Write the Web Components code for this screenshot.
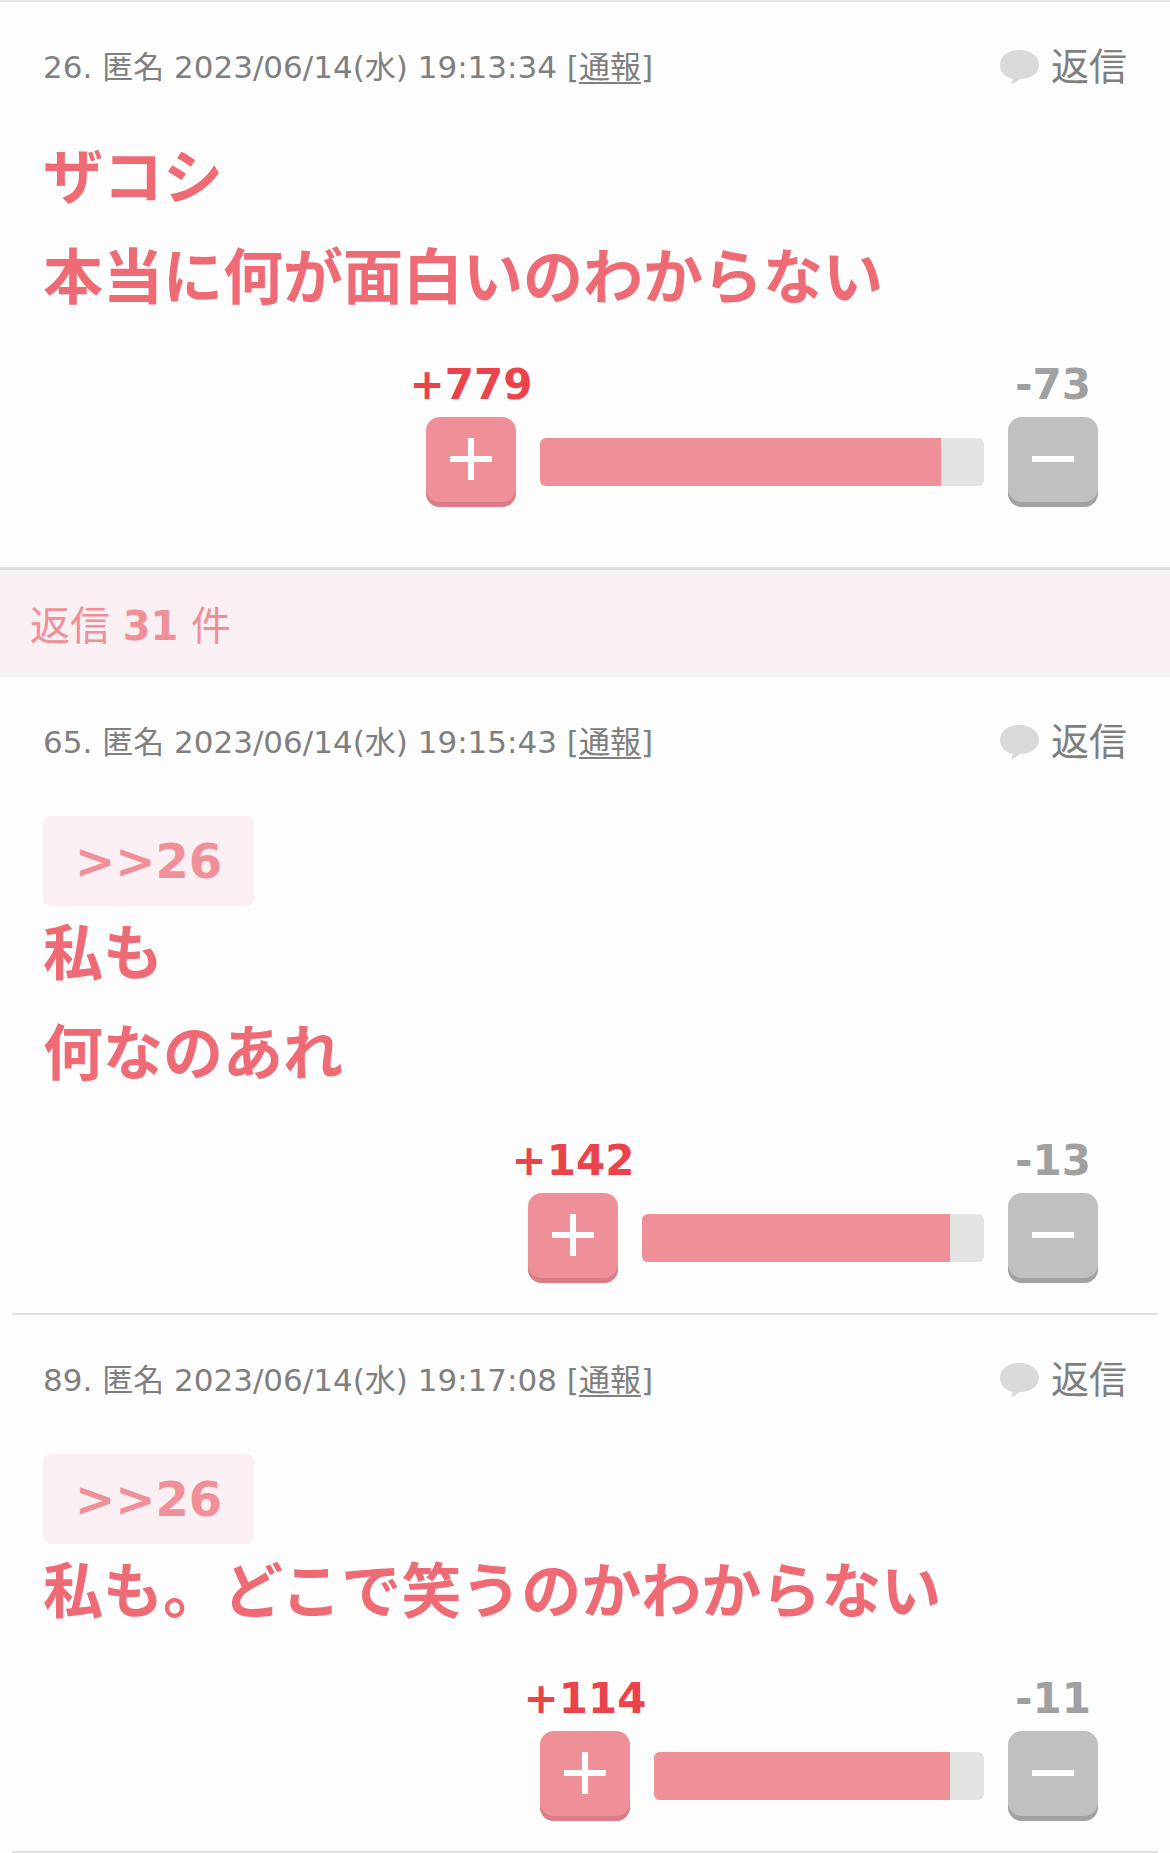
<!DOCTYPE html>
<html lang="ja">
<head>
<meta charset="utf-8">
<meta name="viewport" content="width=device-width, initial-scale=1">
<title>コメント</title>
<style>
  body {
    margin: 0;
    background: #fdfdfd;
    color: #7f7f7f;
    font-family: Verdana, "DejaVu Sans", "Noto Sans CJK JP", sans-serif;
  }
</style>
</head>
<body>

<comment-list>
  <comment-item class="parent" number="26" date="2023/06/14(水) 19:13:34">
    ザコシ<br>本当に何が面白いのわからない
    <vote-bar slot="votes" plus="779" minus="73" width="444" fill="401"></vote-bar>
  </comment-item>

  <reply-count>31</reply-count>

  <comment-item number="65" date="2023/06/14(水) 19:15:43">
    <reply-anchor to="26"></reply-anchor>
    私も<br>何なのあれ
    <vote-bar slot="votes" plus="142" minus="13" width="342" fill="308"></vote-bar>
  </comment-item>

  <comment-item number="89" date="2023/06/14(水) 19:17:08">
    <reply-anchor to="26"></reply-anchor>
    私も。どこで笑うのかわからない
    <vote-bar slot="votes" plus="114" minus="11" width="330" fill="296"></vote-bar>
  </comment-item>
</comment-list>

<script>
function attach(element, html) {
  const template = document.createElement('template')
  template.innerHTML = html
  const root = element.attachShadow({ mode: 'open' })
  root.appendChild(template.content.cloneNode(true))
  return root
}

class CommentList extends HTMLElement {
  constructor() {
    super()
    attach(this, `
      <style>
        :host {
          display: block;
          border-top: 2px solid #e6e6e6;
        }
      </style>
      <main><slot></slot></main>
    `)
  }
}

class CommentItem extends HTMLElement {
  constructor() {
    super()
    this._shadowRoot = attach(this, `
      <style>
        :host {
          display: block;
          margin: 0 12px;
          padding: 40px 31px 30px;
          border-bottom: 2px solid #e0e0e0;
        }

        /* the thread opener is closed by the reply count bar */
        :host(.parent) {
          padding-bottom: 60px;
          border-bottom: 0;
        }

        header {
          display: flex;
          justify-content: space-between;
          align-items: center;
          height: 50px;
          font-size: 31px;
          line-height: 50px;
        }

        a {
          color: inherit;
        }

        .report {
          text-decoration-thickness: 2px;
          text-underline-offset: 4px;
        }

        .reply {
          display: flex;
          align-items: center;
          gap: 12px;
          padding: 0;
          border: 0;
          background: none;
          color: inherit;
          font-family: inherit;
          font-size: 38px;
          line-height: 52px;
        }

        .body {
          margin-top: 36px;
          color: #ee6b76;
          font-size: 60px;
          font-weight: 700;
          line-height: 100px;
        }

        .votes {
          display: flex;
          justify-content: flex-end;
          margin-top: 32px;
          padding-right: 29px;
        }
      </style>

      <article>
        <header>
          <span><span class="number"></span>. 匿名 <span class="date"></span> [<a class="report" href="#report">通報</a>]</span>
          <button class="reply" type="button">
            <svg width="39" height="34" viewBox="0 0 39 34" aria-hidden="true">
              <path d="M19 0C8 0 0 6 0 15c0 7 5 12 13 14-1 2-2 4-1 5 3-1 5-3 8-5 11 0 19-6 19-14C39 6 30 0 19 0z" fill="#d9d9d9"/>
            </svg>
            <span>返信</span>
          </button>
        </header>
        <div class="body"><slot></slot></div>
        <div class="votes"><slot name="votes"></slot></div>
      </article>
    `)
  }

  connectedCallback() {
    this._shadowRoot.querySelector('.number').textContent = this.getAttribute('number')
    this._shadowRoot.querySelector('.date').textContent = this.getAttribute('date')
  }
}

class ReplyAnchor extends HTMLElement {
  constructor() {
    super()
    this._shadowRoot = attach(this, `
      <style>
        :host {
          display: block;
          height: 88px;
          padding-top: 13px;
        }

        a {
          display: block;
          width: fit-content;
          padding: 0 32px;
          border-radius: 8px;
          background: #faeff2;
          color: #ef8f98;
          font-size: 48px;
          line-height: 90px;
          text-decoration: none;
        }
      </style>
      <a></a>
    `)
  }

  connectedCallback() {
    const link = this._shadowRoot.querySelector('a')
    link.href = '#comment' + this.getAttribute('to')
    link.textContent = '>>' + this.getAttribute('to')
  }
}

class ReplyCount extends HTMLElement {
  constructor() {
    super()
    attach(this, `
      <style>
        :host {
          display: block;
          padding: 10px 30px 0;
          border-top: 3px solid #e0e0e0;
          border-bottom: 5px solid #f5f3f4;
          background: #faeff2;
          box-shadow: inset 0 6px #f3f2f2;
          color: #ef8f98;
          font-size: 40px;
          line-height: 92px;
        }

        p {
          margin: 0;
        }
      </style>
      <p>返信 <b><slot></slot></b> 件</p>
    `)
  }
}

class VoteBar extends HTMLElement {
  constructor() {
    super()
    this._shadowRoot = attach(this, `
      <style>
        :host {
          display: grid;
          grid-template-columns: 90px auto 90px;
          column-gap: 24px;
          align-items: center;
        }

        .count {
          display: flex;
          justify-content: center;
          height: 57px;
          font-size: 42px;
          font-weight: 700;
          line-height: 49px;
          white-space: nowrap;
        }

        .plus {
          color: #ea434b;
        }

        .minus {
          grid-column: 3;
          color: #a0a0a0;
        }

        button {
          display: flex;
          justify-content: center;
          align-items: center;
          height: 90px;
          padding: 0 0 6px;
          border: 0;
          border-radius: 14px;
          background: #ef8f98;
          box-shadow: inset 0 -5px #db7d88;
        }

        button.down {
          background: #c0c0c0;
          box-shadow: inset 0 -5px #a2a2a2;
        }

        .track {
          height: 48px;
          border-radius: 6px;
          background: #e3e3e3;
          overflow: hidden;
        }

        .fill {
          height: 100%;
          background: #ef8f98;
        }
      </style>

      <span class="count plus"></span>
      <span class="count minus"></span>
      <button class="up" type="button" aria-label="プラス">
        <svg width="42" height="42" viewBox="0 0 42 42" stroke="#fff" stroke-width="6"><path d="M0 21h42M21 0v42"/></svg>
      </button>
      <div class="track"><div class="fill"></div></div>
      <button class="down" type="button" aria-label="マイナス">
        <svg width="42" height="42" viewBox="0 0 42 42" stroke="#fff" stroke-width="6"><path d="M0 21h42"/></svg>
      </button>
    `)
  }

  connectedCallback() {
    const width = this.getAttribute('width')

    this._shadowRoot.querySelector('.plus').textContent = '+' + this.getAttribute('plus')
    this._shadowRoot.querySelector('.minus').textContent = '-' + this.getAttribute('minus')
    this._shadowRoot.querySelector('.track').style.width = width + 'px'
    this._shadowRoot.querySelector('.fill').style.width = this.getAttribute('fill') / width * 100 + '%'
  }
}

window.customElements.define('comment-list', CommentList)
window.customElements.define('comment-item', CommentItem)
window.customElements.define('reply-anchor', ReplyAnchor)
window.customElements.define('reply-count', ReplyCount)
window.customElements.define('vote-bar', VoteBar)
</script>
</body>
</html>
